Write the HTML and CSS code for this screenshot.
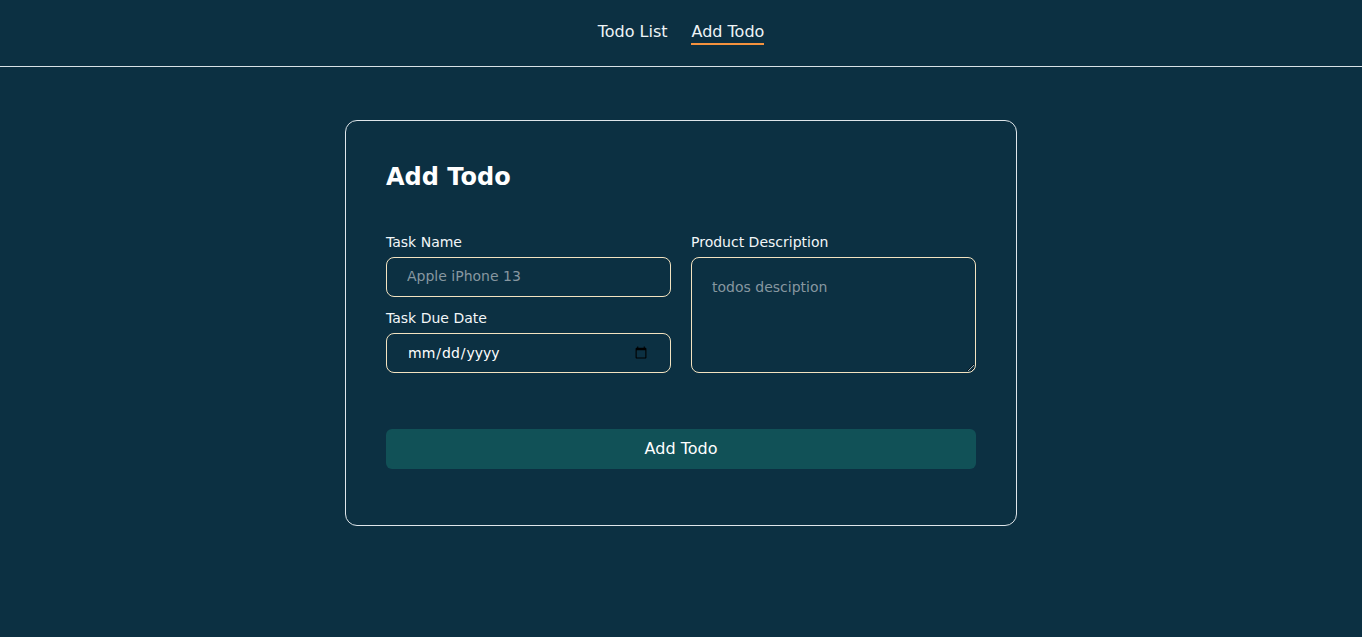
FILE: index.html
```html
<!DOCTYPE html>
<html lang="en">
<head>
<meta charset="utf-8">
<title>Add Todo</title>
<link rel="stylesheet" href="styles.css">
</head>
<body>
<header class="nav">
  <a class="nav-link" href="#">Todo List</a>
  <a class="nav-link active" href="#">Add Todo</a>
</header>
<main class="main">
  <form class="card">
    <h1 class="title">Add Todo</h1>
    <div class="grid">
      <div class="col">
        <label class="label" for="name">Task Name</label>
        <input class="field" id="name" type="text" placeholder="Apple iPhone 13">
        <label class="label label-gap" for="date">Task Due Date</label>
        <input class="field date" id="date" type="date">
      </div>
      <div class="col">
        <label class="label" for="desc">Product Description</label>
        <textarea class="field area" id="desc" placeholder="todos desciption"></textarea>
      </div>
    </div>
    <button class="submit" type="button">Add Todo</button>
  </form>
</main>
</body>
</html>
```
FILE: styles.css
```css
* { box-sizing: border-box; }
html, body { margin: 0; padding: 0; }
body {
  background: #0c3042;
  color: #ffffff;
  font-family: "DejaVu Sans", sans-serif;
  min-height: 100vh;
}
.nav {
  height: 67px;
  border-bottom: 1px solid #d9e2e6;
  display: flex;
  justify-content: center;
  align-items: flex-start;
  gap: 24px;
  padding-top: 22px;
}
.nav-link {
  color: #eef4f7;
  text-decoration: none;
  font-size: 16px;
  line-height: 20px;
  padding-bottom: 1px;
  border-bottom: 2px solid transparent;
}
.nav-link.active { border-bottom-color: #f5923e; }
.main {
  display: flex;
  justify-content: center;
  padding-top: 53px;
}
.card {
  width: 672px;
  border: 1px solid #dfe6ea;
  border-radius: 12px;
  padding: 40px 40px 56px;
}
.title {
  margin: 0 0 41px;
  font-size: 24px;
  line-height: 32px;
  font-weight: bold;
}
.grid {
  display: grid;
  grid-template-columns: 1fr 1fr;
  gap: 20px;
}
.col { display: flex; flex-direction: column; }
.label {
  font-size: 14px;
  line-height: 16px;
  margin-bottom: 7px;
  color: #f2f6f8;
}
.label-gap { margin-top: 13px; }
.field {
  height: 40px;
  border: 1px solid #f3e3c0;
  border-radius: 8px;
  background: transparent;
  color: #ffffff;
  font-family: "DejaVu Sans", sans-serif;
  font-size: 14px;
  padding: 0 20px 2px;
  outline: none;
}
.field::placeholder { color: #8797a0; }
.date { padding: 0 20px 0; }
.area {
  height: 116px;
  padding: 21px 20px 20px;
  resize: vertical;
}
.submit {
  margin-top: 56px;
  width: 100%;
  height: 40px;
  border: none;
  border-radius: 6px;
  background: #115157;
  color: #ffffff;
  font-family: "DejaVu Sans", sans-serif;
  font-size: 16px;
  padding: 0 0 2px;
  cursor: pointer;
}
```
